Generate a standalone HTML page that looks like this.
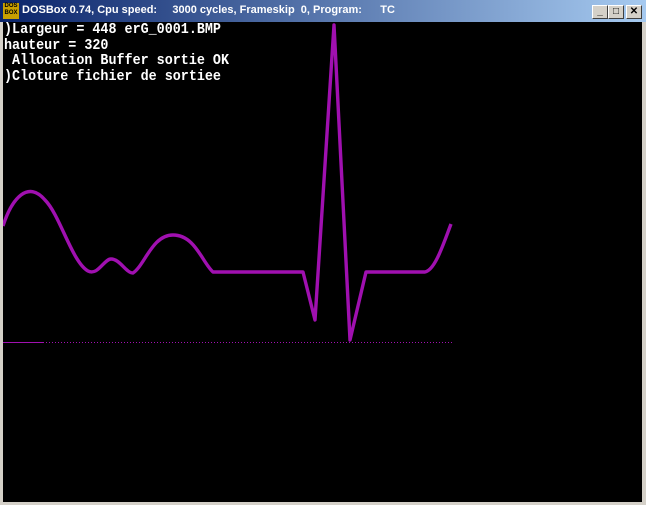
<!DOCTYPE html>
<html><head><style>
body{margin:0;width:646px;height:505px;background:#d4d0c8;position:relative;overflow:hidden;font-family:"Liberation Sans",sans-serif}
#title{position:absolute;left:0;top:0;width:646px;height:22px;background:linear-gradient(90deg,#0a246a,#a6caf0);}
#title span{position:absolute;top:4px;font-size:11px;font-weight:bold;color:#fff;white-space:pre}
.btn{position:absolute;top:5px;width:16px;height:14px;background:#d4d0c8;border:1px solid;border-color:#fff #404040 #404040 #fff;box-sizing:border-box;font-size:10px;font-weight:bold;text-align:center;line-height:12px;color:#000}
#scr{position:absolute;left:3px;top:22px;width:639px;height:480px;background:#000}
.t{position:absolute;left:1px;color:#fff;font-family:"Liberation Mono",monospace;font-size:13.4px;font-weight:bold;white-space:pre;line-height:16px;transform:scaleY(1.1);transform-origin:0 0}
</style></head><body>
<div id="title">
<div style="position:absolute;left:3px;top:3px;width:16px;height:16px;background:#c8a000;font-size:6px;line-height:7px;color:#000;text-align:center;font-weight:bold">DOS<br>BOX</div>
<span style="left:22px">DOSBox 0.74, Cpu speed:     3000 cycles, Frameskip  0, Program:      TC</span>
</div>
<div class="btn" style="left:592px">_</div>
<div class="btn" style="left:608px">□</div>
<div class="btn" style="left:626px">✕</div>
<div id="scr">
<div class="t" style="top:0">)Largeur = 448 erG_0001.BMP</div>
<div class="t" style="top:16px">hauteur = 320</div>
<div class="t" style="top:31px"> Allocation Buffer sortie OK</div>
<div class="t" style="top:47px">)Cloture fichier de sortiee</div>
<svg width="639" height="480" style="position:absolute;left:0;top:0">
<g transform="translate(-3,-22)">
<path d="M3,226 C12,198 28,180 45,200 C60,215 72,262 88,271 C98,276 104,259 111,259 C120,259 126,273 133,273 C145,265 152,235 173,235 C195,235 202,262 213,272 L303,272 L315,320 L334,25 L350,340 L366,272 L425,272 C435,270 443,245 451,224" fill="none" stroke="#a010b0" stroke-width="3.4" stroke-linejoin="round"/>
<line x1="3" y1="342.5" x2="43" y2="342.5" stroke="#a010b0" stroke-width="1"/>
<line x1="43" y1="342.5" x2="452" y2="342.5" stroke="#a010b0" stroke-width="1" stroke-dasharray="1 2"/>
</g>
</svg>
</div>
</body></html>
